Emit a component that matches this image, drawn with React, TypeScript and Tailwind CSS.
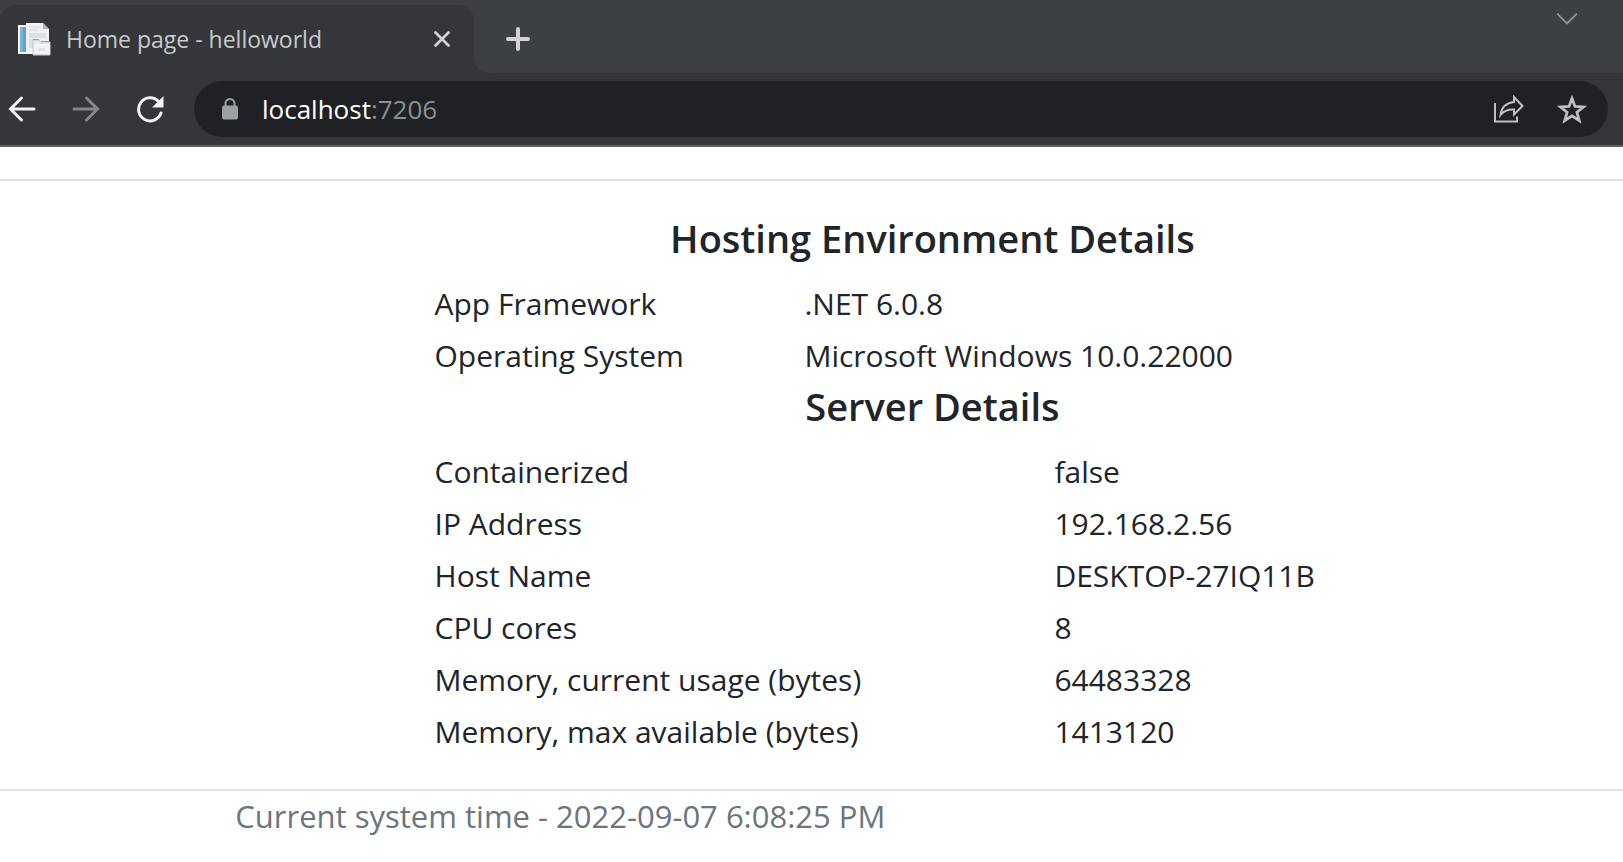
import React from "react";

type Row = { label: string; value: string };

const hosting: Row[] = [
  { label: "App Framework", value: ".NET 6.0.8" },
  { label: "Operating System", value: "Microsoft Windows 10.0.22000" },
];

const server: Row[] = [
  { label: "Containerized", value: "false" },
  { label: "IP Address", value: "192.168.2.56" },
  { label: "Host Name", value: "DESKTOP-27IQ11B" },
  { label: "CPU cores", value: "8" },
  { label: "Memory, current usage (bytes)", value: "64483328" },
  { label: "Memory, max available (bytes)", value: "1413120" },
];

function PageIcon() {
  return (
    <svg width="34" height="34" viewBox="0 0 34 34" aria-hidden="true">
      <path d="M1 3h22v29H1z" fill="#f4f7fa" />
      <path d="M3 5h6v25H3z" fill="#5da3d0" />
      <path d="M3 5h3v25H3z" fill="#79b6dc" />
      <path d="M9 1h17l6 6v24H9z" fill="#f1f2f3" />
      <path d="M26 1v6h6z" fill="#aeb4ba" />
      <path d="M12 5h11M12 8h9" stroke="#d3d7da" strokeWidth="1" />
      <path d="M12 11h17v5H12zM12 17h4v9h-4z" fill="#dcdfe3" />
      <path d="M16 18h6l1 2h10v13H16z" fill="#e6eaf0" stroke="#c3c9d0" strokeWidth="1" />
      <path d="M17 22h16v10H17z" fill="#f1f3f7" />
      <path d="M21 26h7v3h-7z" fill="#dde1e9" />
      <path d="M16 17.500h6M24 19.500h9" stroke="#9a9fa5" strokeWidth="1" />
    </svg>
  );
}

function ArrowIcon({ flip }: { flip?: boolean }) {
  return (
    <svg width="28" height="28" viewBox="0 0 28 28" fill="none" stroke="currentColor" strokeWidth="3" strokeLinecap="round" aria-hidden="true">
      {flip ? <path d="M2 14h23M14.500 3l11 11-11 11" /> : <path d="M26 14H3M13.500 3l-11 11 11 11" />}
    </svg>
  );
}

function ReloadIcon() {
  return (
    <svg width="28" height="28" viewBox="0 0 28 28" fill="none" aria-hidden="true">
      <path d="M22.500 6.500A11.500 11.500 0 1 0 25 18" stroke="currentColor" strokeWidth="3" strokeLinecap="round" />
      <path d="M27.500 1v11.500H16z" fill="currentColor" />
    </svg>
  );
}

function DetailTable({ title, rows, labelWidth }: { title: string; rows: Row[]; labelWidth: string }) {
  return (
    <table className="w-full table-fixed border-collapse text-left">
      <caption className="mb-4 text-[38px] leading-[48px] font-semibold">{title}</caption>
      <colgroup>
        <col className={labelWidth} />
        <col />
      </colgroup>
      <tbody>
        {rows.map((row) => (
          <tr key={row.label}>
            <th scope="row" className="p-0.5 font-normal">{row.label}</th>
            <td className="p-0.5">{row.value}</td>
          </tr>
        ))}
      </tbody>
    </table>
  );
}

export default function App() {
  return (
    <div className="min-h-screen overflow-x-hidden bg-white font-['Open_Sans','Noto_Sans',sans-serif] text-[#212529]">
      <header className="border-b-2 border-[#5f5c62] bg-[#35363a]">
        <div className="flex h-[73px] bg-[#3c4043] text-[#d0d2d5]">
          <div className="relative mt-[5px] flex w-[474px] items-center rounded-t-[16px] bg-[#35363a] pl-[17px]">
            <PageIcon />
            <span className="ml-[15px] text-[23px] leading-8 text-[#c8cacc]">Home page - helloworld</span>
            <button type="button" aria-label="Close tab" className="mr-6 ml-auto">
              <svg width="16" height="16" viewBox="0 0 16 16" stroke="currentColor" strokeWidth="2.800" strokeLinecap="round" aria-hidden="true">
                <path d="M1.500 1.500l13 13M14.500 1.500l-13 13" />
              </svg>
            </button>
            <svg className="absolute bottom-0 left-full" width="16" height="16" viewBox="0 0 16 16" aria-hidden="true">
              <path d="M0 0v16h16A16 16 0 0 1 0 0z" fill="#35363a" />
            </svg>
          </div>
          <button type="button" aria-label="New tab" className="mt-[5px] ml-8">
            <svg width="24" height="24" viewBox="0 0 24 24" stroke="currentColor" strokeWidth="4" strokeLinecap="round" aria-hidden="true">
              <path d="M12 2v20M2 12h20" />
            </svg>
          </button>
          <button type="button" aria-label="Search tabs" className="mt-[13px] mr-[46px] ml-auto self-start text-[#929597]">
            <svg width="20" height="12" viewBox="0 0 20 12" fill="none" stroke="currentColor" strokeWidth="1.800" aria-hidden="true">
              <path d="M0 .5l10 10 10-10" />
            </svg>
          </button>
        </div>
        <div className="flex items-center py-2 pr-[15px] pl-2 text-[#f1f3f4]">
          <button type="button" aria-label="Back"><ArrowIcon /></button>
          <button type="button" aria-label="Forward" className="ml-9 text-[#85878a]"><ArrowIcon flip /></button>
          <button type="button" aria-label="Reload" className="ml-9"><ReloadIcon /></button>
          <div className="relative ml-[30px] flex h-14 flex-1 items-center rounded-full bg-[#202124] pr-[21px] pl-7">
            <svg width="16" height="22" viewBox="0 0 16 22" aria-hidden="true">
              <path d="M3.500 9V5.500a4.500 4.500 0 0 1 9 0V9" fill="none" stroke="#9aa0a6" strokeWidth="2" />
              <rect y="7.500" width="16" height="14" rx="2" fill="#9aa0a6" />
            </svg>
            <a href="#" className="ml-6 text-[26px] leading-9 text-white">
              localhost<span className="text-[#8d9095]">:7206</span>
            </a>
            <button type="button" aria-label="Share this page" className="ml-auto text-[#bdc1c6]">
              <svg width="31" height="28" viewBox="0 0 31 28" fill="none" stroke="currentColor" strokeWidth="2" aria-hidden="true">
                <path d="M2 8v18.500h22v-5" />
                <path d="M21 2l8.500 9L21 19.500v-5c-6.500-.3-10.500 1.500-13.500 5.500.8-7 5.500-12 13.500-13z" />
              </svg>
            </button>
            <button type="button" aria-label="Bookmark this page" className="ml-[33px] text-[#bdc1c6]">
              <svg width="30" height="29" viewBox="0 0 30 29" fill="none" stroke="currentColor" strokeWidth="2.800" aria-hidden="true">
                <path d="M15 3.500l3 8 8.600.4-6.700 5.300 2.300 8.300-7.200-4.700-7.200 4.700 2.300-8.300-6.700-5.300 8.600-.4z" />
              </svg>
            </button>
          </div>
        </div>
      </header>
      <div className="h-[34px] border-b-2 border-[#e1e1e1]" />
      <main className="pt-[33px] pr-[11.750%] pb-[31px] pl-[26.650%] text-[30px] leading-[48px]">
        <DetailTable title="Hosting Environment Details" rows={hosting} labelWidth="w-[37%]" />
        <DetailTable title="Server Details" rows={server} labelWidth="w-[62%]" />
      </main>
      <footer className="border-t-2 border-[#e1e1e1] pl-[14.500%] text-[31px] leading-[50px] text-[#6c757d]">
        Current system time - 2022-09-07 6:08:25 PM
      </footer>
    </div>
  );
}
